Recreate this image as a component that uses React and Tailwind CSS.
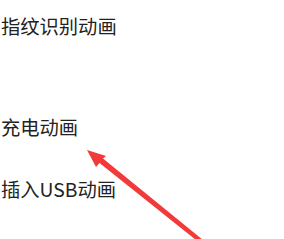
export default function App() {
  return (
    <div className="relative w-[284px] h-[239px] overflow-hidden bg-white">
      <div className="flex flex-col pl-[1px] text-[19.3px] leading-[24px] text-[#222222]" style={{ fontFamily: '"Noto Sans CJK SC", "Noto Sans", sans-serif' }}>
        <div className="mt-[14px]">指纹识别动画</div>
        <div className="mt-[77px]">充电动画</div>
        <div className="mt-[38px]">插入USB动画</div>
      </div>
      <svg className="absolute left-0 top-0" width="284" height="239" viewBox="0 0 284 239">
        <polygon points="87,150 106,156 103,158.5 203,240 196,240 99.5,163 96,167" fill="#f23a3a" />
      </svg>
    </div>
  );
}
